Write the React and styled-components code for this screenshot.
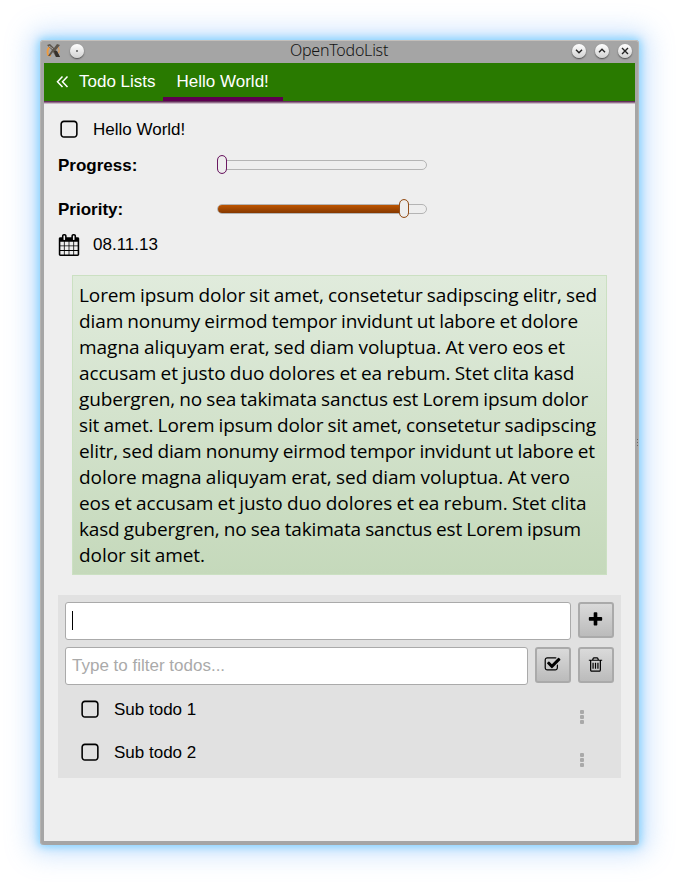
import React from 'react';
import styled, { createGlobalStyle } from 'styled-components';

const GlobalStyle = createGlobalStyle`
  * { box-sizing: border-box; }
  body {
    margin: 0;
    background: #fff;
    color: #000;
    font: 17px/20px "Liberation Sans", Arial, sans-serif;
  }
`;

const ICONS = {
  square:
    'M1312 256h-832q-66 0-113 47t-47 113v832q0 66 47 113t113 47h832q66 0 113-47t47-113v-832q0-66-47-113t-113-47zm288 160v832q0 119-84.5 203.5t-203.5 84.5h-832q-119 0-203.5-84.5t-84.5-203.5v-832q0-119 84.5-203.5t203.5-84.5h832q119 0 203.5 84.5t84.5 203.5z',
  check:
    'M1472 930v318q0 119-84.5 203.5t-203.5 84.5h-832q-119 0-203.5-84.5t-84.5-203.5v-832q0-119 84.5-203.5t203.5-84.5h832q63 0 117 25 15 7 18 23 3 17-9 29l-49 49q-10 10-23 10-3 0-9-2-23-6-45-6h-832q-66 0-113 47t-47 113v832q0 66 47 113t113 47h832q66 0 113-47t47-113v-254q0-13 9-22l64-64q10-10 23-10 6 0 12 3 20 8 20 29zm231-489l-814 814q-24 24-57 24t-57-24l-430-430q-24-24-24-57t24-57l110-110q24-24 57-24t57 24l263 263 647-647q24-24 57-24t57 24l110 110q24 24 24 57t-24 57z',
  trash:
    'M704 736v576q0 14-9 23t-23 9h-64q-14 0-23-9t-9-23v-576q0-14 9-23t23-9h64q14 0 23 9t9 23zm256 0v576q0 14-9 23t-23 9h-64q-14 0-23-9t-9-23v-576q0-14 9-23t23-9h64q14 0 23 9t9 23zm256 0v576q0 14-9 23t-23 9h-64q-14 0-23-9t-9-23v-576q0-14 9-23t23-9h64q14 0 23 9t9 23zm128 724v-948h-896v948q0 22 7 40.5t14.5 27 10.5 8.5h832q3 0 10.5-8.5t14.5-27 7-40.5zm-672-1076h448l-48-117q-7-9-17-11h-317q-10 2-17 11zm928 32v64q0 14-9 23t-23 9h-96v948q0 83-47 143.5t-113 60.5h-832q-66 0-113-58.5t-47-141.5v-952h-96q-14 0-23-9t-9-23v-64q0-14 9-23t23-9h309l70-167q15-37 54-63t79-26h320q40 0 79 26t54 63l70 167h309q14 0 23 9t9 23z',
  calendar:
    'M192 1664h288v-288h-288v288zm352 0h320v-288h-320v288zm-352-352h288v-320h-288v320zm352 0h320v-320h-320v320zm-352-384h288v-288h-288v288zm736 736h320v-288h-320v288zm-384-736h320v-288h-320v288zm768 736h288v-288h-288v288zm-384-352h320v-320h-320v320zm-352-864v-288q0-13-9.5-22.5t-22.5-9.5h-64q-13 0-22.5 9.5t-9.5 22.5v288q0 13 9.5 22.5t22.5 9.5h64q13 0 22.5-9.5t9.5-22.5zm736 864h288v-320h-288v320zm-384-384h320v-288h-320v288zm384 0h288v-288h-288v288zm32-480v-288q0-13-9.5-22.5t-22.5-9.5h-64q-13 0-22.5 9.5t-9.5 22.5v288q0 13 9.5 22.5t22.5 9.5h64q13 0 22.5-9.5t9.5-22.5zm384-64v1280q0 52-38 90t-90 38h-1408q-52 0-90-38t-38-90v-1280q0-52 38-90t90-38h128v-96q0-66 47-113t113-47h64q66 0 113 47t47 113v96h384v-96q0-66 47-113t113-47h64q66 0 113 47t47 113v96h128q52 0 90 38t38 90z',
  plus:
    'M1600 736v192q0 40-28 68t-68 28h-416v416q0 40-28 68t-68 28h-192q-40 0-68-28t-28-68v-416h-416q-40 0-68-28t-28-68v-192q0-40 28-68t68-28h416v-416q0-40 28-68t68-28h192q40 0 68 28t28 68v416h416q40 0 68 28t28 68z',
};

const Svg = styled.svg`
  display: block;
  flex: none;
  width: ${(p) => p.$size}px;
  height: ${(p) => p.$size}px;
`;

const Icon = ({ name, size }) => (
  <Svg $size={size} viewBox="0 0 1792 1792" aria-hidden="true">
    <path d={ICONS[name]} fill="currentColor" />
  </Svg>
);

const Desktop = styled.div`
  height: 885px;
  padding: 40px;
  overflow: hidden;
`;

const Window = styled.div`
  position: relative;
  display: flex;
  flex-direction: column;
  width: 599px;
  height: 805px;
  padding: 0 4px 4px;
  background: #a5a5a5;
  border-radius: 4px;
  box-shadow:
    inset 0 1px #c3bfbb,
    inset -1px 0 #b5b3b1,
    inset 1px 0 #b5b3b1,
    0 0 9px 2px rgba(80, 195, 255, 0.62),
    0 0 26px 9px rgba(110, 175, 250, 0.36);
`;

const ResizeGrip = styled.div`
  position: absolute;
  top: 399px;
  right: 1px;
  width: 1px;
  height: 7px;
  background: repeating-linear-gradient(#666 0 1px, transparent 1px 3px);
`;

const TitleBar = styled.div`
  display: grid;
  grid-template-columns: 80px 1fr 80px;
  align-items: center;
  height: 23px;
  flex: none;
  padding-bottom: 2px;
`;

const TitleGroup = styled.div`
  display: flex;
  align-items: center;
  gap: 9px;
  justify-content: ${(p) => (p.$end ? 'flex-end' : 'flex-start')};
  padding: ${(p) => (p.$end ? '0 3px 0 0' : '0 0 0 2px')};
`;

const Title = styled.div`
  padding-right: 1px;
  text-align: center;
  font: 300 16px/21px "Noto Sans", sans-serif;
  letter-spacing: -0.23px;
  color: #141414;
`;

const RoundButton = styled.button`
  display: grid;
  place-items: center;
  width: 14px;
  height: 14px;
  padding: 0;
  border: 0;
  border-radius: 50%;
  background: linear-gradient(#fff, #d2d2d2);
  box-shadow: 0 1px 1.5px rgba(0, 0, 0, 0.55);
`;

const Glyph = ({ d }) => (
  <Svg $size={14} viewBox="0 0 14 14" aria-hidden="true">
    <path d={d} fill="none" stroke="#222" strokeWidth="1.4" />
  </Svg>
);

const AppIcon = () => (
  <Svg $size={15} viewBox="0 0 15 15" aria-hidden="true">
    <path d="M3.5 4Q.5 7 2 12L5 13" fill="none" stroke="#f29a3a" strokeWidth="1.8" />
    <path d="M12 4Q14 7 12.5 10" fill="none" stroke="#d79a5c" strokeWidth="1.2" />
    <path d="M1 2L4 1L8 5L11 1L14 2L10 7L14 14L10 14L7 9L4 13L2 13L6 7Z" fill="#5d554c" />
    <path d="M8 8L11 8L14 14L10 14Z" fill="#36302c" />
    <path d="M3 3L7 6" stroke="#aaa" />
  </Svg>
);

const Toolbar = styled.nav`
  display: flex;
  height: 41px;
  flex: none;
  padding-bottom: 3px;
  background:
    linear-gradient(#63305b 0 1px, #936f8c 1px 2px, #cbbbc8 2px) bottom / 100% 3px no-repeat,
    #297a00;
  color: #fff;
`;

const Back = styled.a`
  display: flex;
  align-items: center;
  gap: 10px;
  padding: 0 7px 1px 12px;
`;

const Tab = styled.div`
  width: 120px;
  height: 38px;
  padding: 9px 14px 0;
  border-bottom: 4px solid #5e0050;
  white-space: nowrap;
`;

const Page = styled.main`
  flex: 1;
  display: flex;
  flex-direction: column;
  padding: 0 14px;
  background: #eee;
`;

const IconRow = styled.div`
  display: flex;
  align-items: center;
  gap: 13px;
  height: ${(p) => p.$height}px;
`;

const Field = styled.div`
  display: flex;
  align-items: center;
  height: ${(p) => p.$height}px;
  padding-top: ${(p) => p.$top || 0}px;
`;

const FieldLabel = styled.label`
  width: 159px;
  font-weight: bold;
`;

const Track = styled.div`
  display: flex;
  align-items: center;
  width: 210px;
  height: 10px;
  margin-bottom: 3px;
  border: 1px solid #b4b4b4;
  border-radius: 5px;
`;

const Fill = styled.div`
  width: ${(p) => p.$width}px;
  height: 8px;
  border-radius: 4px 0 0 4px;
  background: linear-gradient(#bd5500, #853800);
`;

const Handle = styled.div`
  flex: none;
  width: 10px;
  height: 19px;
  margin-left: -1px;
  border: 1px solid ${(p) => p.$color};
  border-radius: 5px;
  background: #eee;
  box-shadow: inset 0 0 0.5px ${(p) => p.$color};
`;

const Slider = ({ fill, color }) => (
  <Track>
    <Fill $width={fill} />
    <Handle $color={color} />
  </Track>
);

const Note = styled.section`
  height: 300px;
  margin: 19px 14px 0;
  padding: 6px 0 0 6px;
  border: 1px solid #cbe0c2;
  background: linear-gradient(#e0ebdc, #c5d9bb);
  font: 19px/26px "Open Sans", sans-serif;
  white-space: nowrap;
  word-spacing: -0.6px;
`;

const NoteLine = styled.div`
  letter-spacing: ${(p) => p.$spacing}px;
`;

const SubTodos = styled.section`
  display: flex;
  flex-direction: column;
  height: 183px;
  margin-top: 20px;
  padding: 7px;
  background: #e1e1e1;
`;

const InputRow = styled.div`
  display: flex;
  gap: 7px;
  height: 38px;
  margin-bottom: 7px;
  flex: none;
`;

const TextBox = styled.div`
  flex: 1;
  display: flex;
  align-items: center;
  padding: 0 6px 1px;
  border: 1px solid #aaa;
  border-radius: 3px;
  background: #fff;
  color: #aaa;
`;

const Caret = styled.span`
  width: 1px;
  height: 19px;
  background: #000;
`;

const ToolButton = styled.button`
  display: grid;
  place-items: center;
  width: 36px;
  height: 36px;
  padding: 0 1px 1px 0;
  border: 2px solid #aaa;
  border-radius: 3px;
  background: linear-gradient(#dadada, #bbb);
  color: #000;
`;

const SubTodoList = styled.div`
  margin-top: -4px;
`;

const SubTodo = styled.div`
  display: flex;
  align-items: center;
  justify-content: space-between;
  height: 44px;
  margin-bottom: -1px;
  padding: 0 30px 0 14px;
`;

const Dots = styled.div`
  display: grid;
  gap: 1px;
  margin-top: 13px;
`;

const Dot = styled.i`
  width: 4px;
  height: 4px;
  border-radius: 1px;
  background: #a9a9a9;
`;

const NOTE_LINES = [
  ['Lorem ipsum dolor sit amet, consetetur sadipscing elitr, sed', -0.102],
  ['diam nonumy eirmod tempor invidunt ut labore et dolore', -0.117],
  ['magna aliquyam erat, sed diam voluptua. At vero eos et', -0.02],
  ['accusam et justo duo dolores et ea rebum. Stet clita kasd', -0.053],
  ['gubergren, no sea takimata sanctus est Lorem ipsum dolor', -0.133],
  ['sit amet. Lorem ipsum dolor sit amet, consetetur sadipscing', -0.125],
  ['elitr, sed diam nonumy eirmod tempor invidunt ut labore et', -0.121],
  ['dolore magna aliquyam erat, sed diam voluptua. At vero', -0.016],
  ['eos et accusam et justo duo dolores et ea rebum. Stet clita', -0.046],
  ['kasd gubergren, no sea takimata sanctus est Lorem ipsum', -0.157],
  ['dolor sit amet.', -0.061],
];

const SUB_TODOS = ['Sub todo 1', 'Sub todo 2'];

export default function App() {
  return (
    <Desktop>
      <GlobalStyle />
      <Window>
        <TitleBar>
          <TitleGroup>
            <AppIcon />
            <RoundButton aria-label="Menu"><Glyph d="M6.3 7H7.7" /></RoundButton>
          </TitleGroup>
          <Title>OpenTodoList</Title>
          <TitleGroup $end>
            <RoundButton aria-label="Minimize"><Glyph d="M4 5.8L7 8.8L10 5.8" /></RoundButton>
            <RoundButton aria-label="Maximize"><Glyph d="M4 8.2L7 5.2L10 8.2" /></RoundButton>
            <RoundButton aria-label="Close"><Glyph d="M4 4L10 10M10 4L4 10" /></RoundButton>
          </TitleGroup>
        </TitleBar>
        <Toolbar>
          <Back>
            <Svg $size={13} viewBox="0 0 13 13" aria-hidden="true">
              <path d="M6.5 1.5L1.5 6.8L6.5 12M11.5 1.5L6.5 6.8L11.5 12" fill="none" stroke="currentColor" strokeWidth="1.5" />
            </Svg>
            Todo Lists
          </Back>
          <Tab>Hello World!</Tab>
        </Toolbar>
        <Page>
          <IconRow $height={52}>
            <Icon name="square" size={22} />
            Hello World!
          </IconRow>
          <Field $height={20}>
            <FieldLabel>Progress:</FieldLabel>
            <Slider fill={0} color="#6b1a62" />
          </Field>
          <Field $height={58} $top={10}>
            <FieldLabel>Priority:</FieldLabel>
            <Slider fill={182} color="#95501a" />
          </Field>
          <IconRow $height={22}>
            <Icon name="calendar" size={22} />
            08.11.13
          </IconRow>
          <Note>
            {NOTE_LINES.map(([text, spacing]) => (
              <NoteLine key={text} $spacing={spacing}>{text}</NoteLine>
            ))}
          </Note>
          <SubTodos>
            <InputRow>
              <TextBox><Caret /></TextBox>
              <ToolButton aria-label="Add"><Icon name="plus" size={17} /></ToolButton>
            </InputRow>
            <InputRow>
              <TextBox>Type to filter todos...</TextBox>
              <ToolButton aria-label="Show completed"><Icon name="check" size={17} /></ToolButton>
              <ToolButton aria-label="Delete completed"><Icon name="trash" size={17} /></ToolButton>
            </InputRow>
            <SubTodoList>
              {SUB_TODOS.map((label) => (
                <SubTodo key={label}>
                  <IconRow $height={22}>
                    <Icon name="square" size={22} />
                    {label}
                  </IconRow>
                  <Dots><Dot /><Dot /><Dot /></Dots>
                </SubTodo>
              ))}
            </SubTodoList>
          </SubTodos>
        </Page>
        <ResizeGrip />
      </Window>
    </Desktop>
  );
}
